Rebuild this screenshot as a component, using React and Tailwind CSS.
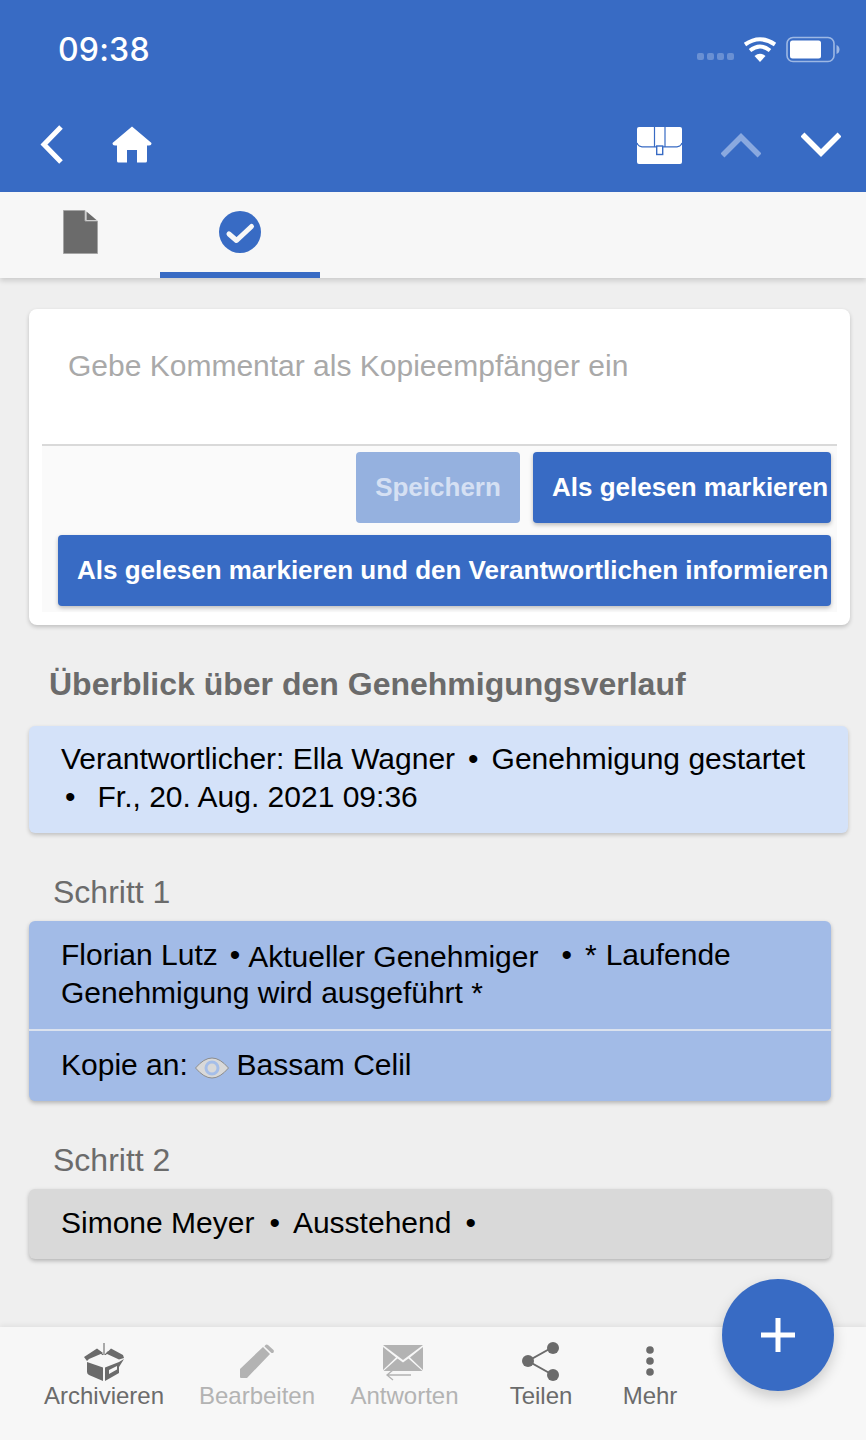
const F = { fontFamily: '"Liberation Sans", Arial, sans-serif' };

function Back() {
  return <svg width="30" height="44" viewBox="0 0 30 44" fill="none"><path d="M26 4 L9 21.5 L26 39" stroke="#fff" strokeWidth="5" /></svg>;
}
function Home() {
  return <svg width="40" height="38" viewBox="0 0 40 38"><path d="M20 .5 L39.5 17 Q39.5 19.5 37 19.5 L35 19.5 L35 35 Q35 36.5 33.5 36.5 L25 36.5 L25 24 L15 24 L15 36.5 L6.5 36.5 Q5 36.5 5 35 L5 19.5 L3 19.5 Q.5 19.5 .5 17 Z" fill="#fff" /></svg>;
}
function Case() {
  return <svg width="45" height="37" viewBox="0 0 45 37" className="-mr-[1px]"><rect width="45" height="37" rx="2" fill="#fff" /><path d="M17.5 0 V19.5 M28 0 V19.5 M0 16 Q1 19.5 5 19.8 H19.5 M25.5 19.8 H40 Q44 19.5 45 16" fill="none" stroke="#386bc4" strokeWidth="1.2" /><rect x="19.7" y="19" width="6" height="8.5" fill="#fff" stroke="#386bc4" strokeWidth="1.4" /></svg>;
}
function Chevron({ up, color }) {
  return <svg width="40" height="26" viewBox="0 0 40 26" fill="none"><path d={up ? "M1.5 23.5 L20 5 L38.5 23.5" : "M1.5 2.5 L20 21 L38.5 2.5"} stroke={color} strokeWidth="5.5" /></svg>;
}
function Wifi() {
  return <svg width="34" height="26" viewBox="0 0 34 26"><path d="M17 25 L11.5 19 Q17 14.5 22.5 19 Z" fill="#fff" /><path d="M7 13.5 Q17 5.5 27 13.5 M2 7.5 Q17 -3 32 7.5" stroke="#fff" strokeWidth="4" fill="none" /></svg>;
}
function Battery() {
  return <svg width="54" height="28" viewBox="0 0 54 28"><rect x="1" y="1.5" width="47" height="24" rx="6" fill="none" stroke="#9db8e4" strokeWidth="1.6" /><rect x="4" y="4.5" width="31" height="18" rx="2.5" fill="#fff" /><path d="M50.5 9 Q53.5 10 53.5 13.5 Q53.5 17 50.5 18 Z" fill="#9db8e4" /></svg>;
}
function Doc() {
  return <svg width="35" height="44" viewBox="0 0 35 44"><path d="M.5 .5 H22 V11 H34.5 V43.5 H.5 Z" fill="#6b6b6b" stroke="#a5a5a5" /><path d="M23.5 1.5 L33.5 10 H23.5 Z" fill="#6b6b6b" /></svg>;
}
function CheckCircle() {
  return <svg width="44" height="44" viewBox="0 0 44 44"><circle cx="22" cy="22" r="21" fill="#386bc4" /><path d="M11 24 L18.5 30.5 L33.5 16.5" fill="none" stroke="#f7f7f7" strokeWidth="5" strokeLinejoin="round" strokeLinecap="round" /></svg>;
}
function Box() {
  return <svg width="42" height="39" viewBox="0 0 42 39"><path d="M21 0 V13 M16.5 8.5 L21 13 L25.5 8.5" stroke="#6b6b6b" strokeWidth="1.1" fill="none" /><path d="M14 5.5 L1 14 L4 18 L6 16 L20 10 Z M28 5.5 L40 12 L41 15 L36 16.5 L23 10.5 Z" fill="#6b6b6b" /><path d="M7 17 L21 11.5 L35 17 L21 22 Z" fill="#f7f7f7" /><path d="M4 19 L20 24.5 V38 L6 32 Q4 31 4 29 Z" fill="#6b6b6b" /><path d="M22 24.5 L36 19 L41 16 L36 24 V30 L22 38 Z M26 27 V31 L34 26.5 V23 Z" fill="#6b6b6b" fillRule="evenodd" /></svg>;
}
function Pencil() {
  return <svg width="36" height="36" viewBox="0 0 36 36" className="mb-[2px]"><path d="M1 25 L24 3 L31 10 L8 34 H2 Q1 34 1 33 Z M26 1.5 Q27.5 0 29 1 L34.5 6 Q35.5 7.5 34 9 L32.5 9 L25.5 2.5 Z" fill="#b3b3b3" /></svg>;
}
function Mail() {
  return <svg width="42" height="38" viewBox="0 0 42 38" fill="none" className="mr-[4px]"><path d="M1 1 H41 L21 16 Z" fill="#b3b3b3" /><path d="M1 3 L14 13.5 L1 26 Z M41 3 L28 13.5 L41 26 Z M1.5 27 L15.5 14.5 L21 18.5 L26.5 14.5 L40.5 27 Z" fill="#b3b3b3" /><path d="M29 31 H6 M11 26 L5 31 L11 36" stroke="#b3b3b3" strokeWidth="1.3" /></svg>;
}
function Share() {
  return <svg width="40" height="40" viewBox="0 0 40 40" className="mb-[1px]"><path d="M32 6 L7 20 L32 34" stroke="#6b6b6b" strokeWidth="2" fill="none" /><circle cx="32" cy="7" r="6" fill="#6b6b6b" /><circle cx="7" cy="20" r="6" fill="#6b6b6b" /><circle cx="32" cy="34" r="6" fill="#6b6b6b" /></svg>;
}
function Dots() {
  return <svg width="12" height="32" viewBox="0 0 12 32" className="mb-[5px]"><circle cx="6" cy="5" r="3.8" fill="#6b6b6b" /><circle cx="6" cy="16" r="3.8" fill="#6b6b6b" /><circle cx="6" cy="27" r="3.8" fill="#6b6b6b" /></svg>;
}
function Eye() {
  return <svg width="34" height="22" viewBox="0 0 34 22" className="-ml-[1px] inline-block align-[-4px]"><path d="M.5 11 Q9 1 17 1 Q25 1 33.5 11 Q25 21 17 21 Q9 21 .5 11 Z" fill="#d9d9d9" stroke="#8d8d8d" /><circle cx="17" cy="11" r="6" fill="#d9d9d9" stroke="#a5bee9" strokeWidth="3" /></svg>;
}

function NavItem({ icon, label, muted, className }) {
  return (
    <div className={`flex flex-col items-center ${className}`}>
      <div className="flex h-[42px] items-end justify-center">{icon}</div>
      <span className={`text-[24px] leading-[28px] whitespace-nowrap ${muted ? "text-[#b3b3b3]" : "text-[#6b6b6b]"}`}>{label}</span>
    </div>
  );
}

export default function App() {
  return (
    <div style={F} className="relative flex h-[1440px] w-[866px] flex-col overflow-hidden bg-[#efefef]">
      <header className="h-[192px] shrink-0 bg-[#386bc4]">
        <div className="flex h-[123px] items-start justify-between pl-[58px] pr-[26px] pt-[31px]">
          <span className="-mt-[0px] text-[32px] leading-[38px] font-medium tracking-[0.2px] text-white" style={{ fontFamily: "Inter, sans-serif" }}>09:38</span>
          <div className="flex items-center gap-[9px] pt-[5px]">
            <div className="mt-[13px] flex gap-[3px]">
              <span className="h-[7px] w-[7px] rounded-[2px] bg-[#6a90d3]" />
              <span className="h-[7px] w-[7px] rounded-[2px] bg-[#6a90d3]" />
              <span className="h-[7px] w-[7px] rounded-[2px] bg-[#6a90d3]" />
              <span className="h-[7px] w-[7px] rounded-[2px] bg-[#6a90d3]" />
            </div>
            <Wifi />
            <Battery />
          </div>
        </div>
        <div className="flex items-center justify-between pl-[35px] pr-[25px]">
          <div className="flex items-center gap-[47px]">
            <Back />
            <Home />
          </div>
          <div className="flex items-center gap-[40px]">
            <Case />
            <Chevron up color="#8aa9df" />
            <Chevron color="#fff" />
          </div>
        </div>
      </header>

      <div className="flex h-[86px] shrink-0 bg-[#f7f7f7] shadow-[0_3px_5px_rgba(0,0,0,0.14)]">
        <div className="flex w-[160px] items-center justify-center pb-[6px]"><Doc /></div>
        <div className="flex w-[160px] items-center justify-center border-b-[6px] border-[#386bc4]"><CheckCircle /></div>
      </div>

      <main className="flex-1 pl-[29px] pt-[31px]">
        <section className="w-[821px] rounded-[8px] bg-white px-[13px] pb-[13px] shadow-[0_2px_4px_rgba(0,0,0,0.2)]">
          <div className="h-[137px] border-b-2 border-[#d9d9d9] pl-[26px] pt-[39px] text-[30px] leading-[36px] text-[#a9a9a9]">
            Gebe Kommentar als Kopieempfänger ein
          </div>
          <div className="flex h-[166px] flex-col items-end gap-[12px] bg-[#fafafa] pr-[6px] pt-[6px]">
            <div className="flex gap-[13px]">
              <button className="h-[71px] w-[164px] rounded-[4px] bg-[#95b1df] text-center text-[26px] font-bold text-[#d5e0f3]">Speichern</button>
              <button className="h-[71px] w-[298px] rounded-[4px] bg-[#386bc4] pl-[19px] text-left text-[26px] font-bold whitespace-nowrap text-white shadow-[0_2px_4px_rgba(0,0,0,0.25)]">Als gelesen markieren</button>
            </div>
            <button className="h-[71px] w-[773px] rounded-[4px] bg-[#386bc4] pl-[19px] text-left text-[26px] font-bold whitespace-nowrap text-white shadow-[0_2px_4px_rgba(0,0,0,0.25)]">Als gelesen markieren und den Verantwortlichen informieren</button>
          </div>
        </section>

        <h2 className="mt-[40px] ml-[20px] text-[32px] leading-[38px] font-bold text-[#6b6b6b]">Überblick über den Genehmigungsverlauf</h2>

        <div className="mt-[23px] h-[107px] w-[819px] rounded-[6px] bg-[#d4e2f9] px-[32px] pt-[14px] text-[30px] leading-[38px] text-black shadow-[0_2px_4px_rgba(0,0,0,0.2)]">
          Verantwortlicher: Ella Wagner<span className="ml-[13px] mr-[13px]">•</span>Genehmigung gestartet<br /><span className="ml-[4px] mr-[22px]">•</span>Fr., 20. Aug. 2021 09:36
        </div>

        <div className="mt-[40px] ml-[24px] text-[32px] leading-[38px] text-[#6b6b6b]">Schritt 1</div>
        <div className="mt-[10px] w-[802px] rounded-[6px] bg-[#a2bbe7] text-[30px] leading-[38px] text-black shadow-[0_2px_4px_rgba(0,0,0,0.25)]">
          <div className="h-[110px] border-b-2 border-[#dbe2ee] px-[32px] pt-[15px]">
            Florian Lutz<span className="ml-[12px] mr-[8px]">•</span><span className="relative top-[2px]">Aktueller Genehmiger</span><span className="ml-[23px] mr-[13px]">•</span><span className="mr-[9px]">*</span>Laufende<br />Genehmigung wird ausgeführt *
          </div>
          <div className="h-[70px] px-[32px] pt-[15px]">
            Kopie an: <Eye /> <span className="-ml-[1px]">Bassam Celil</span>
          </div>
        </div>

        <div className="mt-[40px] ml-[24px] text-[32px] leading-[38px] text-[#6b6b6b]">Schritt 2</div>
        <div className="mt-[10px] h-[70px] w-[802px] rounded-[6px] bg-[#d9d9d9] px-[32px] pt-[15px] text-[30px] leading-[38px] text-black shadow-[0_2px_4px_rgba(0,0,0,0.25)]">
          Simone Meyer<span className="ml-[15px] mr-[13px]">•</span>Ausstehend<span className="ml-[14px]">•</span>
        </div>
      </main>

      <nav className="relative flex h-[113px] shrink-0 bg-[#f7f7f7] pt-[13px] shadow-[0_-2px_5px_rgba(0,0,0,0.06)]">
        <NavItem icon={<Box />} label="Archivieren" className="ml-[44px] w-[120px]" />
        <NavItem icon={<Pencil />} label="Bearbeiten" muted className="ml-[35px] w-[116px]" />
        <NavItem icon={<Mail />} label="Antworten" muted className="ml-[36px] w-[107px]" />
        <NavItem icon={<Share />} label="Teilen" className="ml-[52px] w-[62px]" />
        <NavItem icon={<Dots />} label="Mehr" className="ml-[51px] w-[54px]" />
      </nav>

      <button className="absolute left-[722px] top-[1279px] flex h-[112px] w-[112px] items-center justify-center rounded-full bg-[#386bc4] shadow-[0_6px_14px_rgba(0,0,0,0.18)]">
        <svg width="34" height="34" viewBox="0 0 34 34"><path d="M17 0 V34 M0 17 H34" stroke="#fff" strokeWidth="5" /></svg>
      </button>
    </div>
  );
}
